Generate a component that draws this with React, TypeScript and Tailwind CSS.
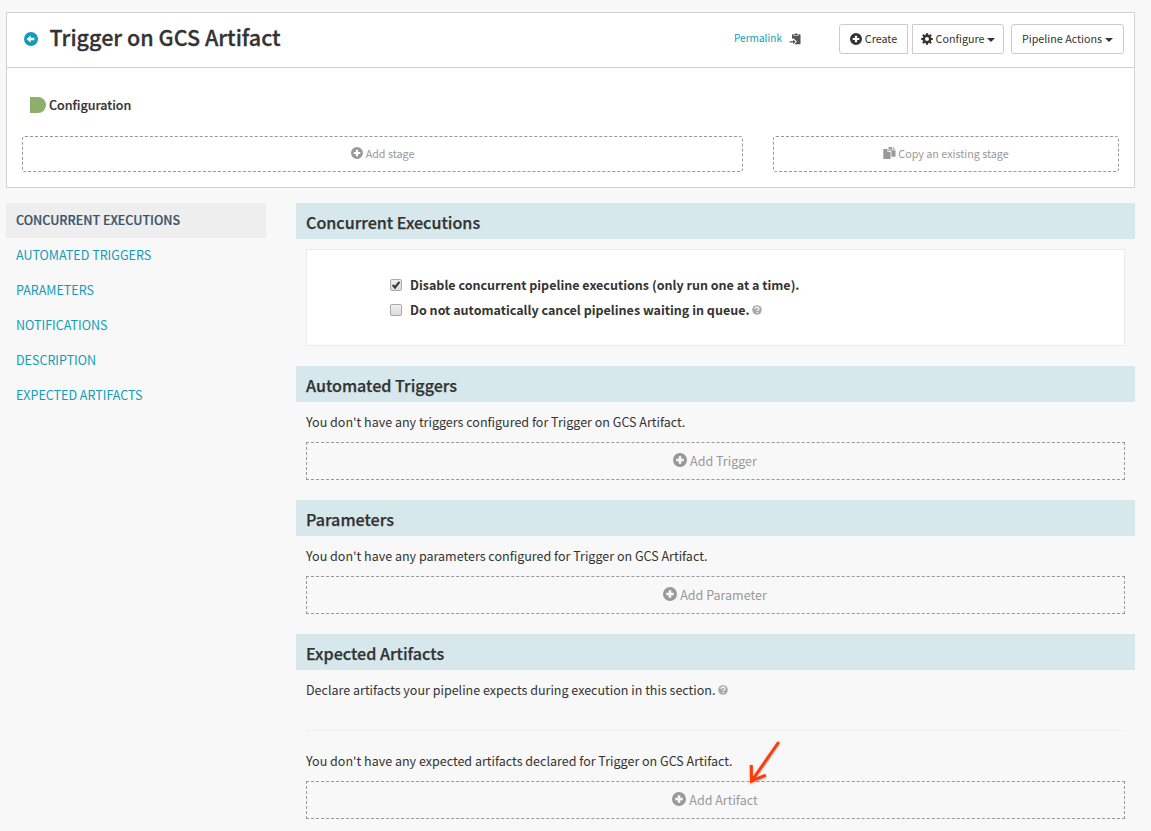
import React from "react";

const PlusIcon = ({ className = "" }: { className?: string }) => (
  <svg viewBox="0 0 14 14" className={"shrink-0 fill-current " + className}>
    <path fillRule="evenodd" d="M7 0a7 7 0 1 1 0 14a7 7 0 0 1 0-14zM5.7 3.2v2.5H3.2v2.6h2.5v2.5h2.6V8.3h2.5V5.7H8.300V3.2z" />
  </svg>
);

const BackIcon = () => (
  <svg viewBox="0 0 14 14" className="h-3.5 w-3.5 shrink-0 fill-[#139cb6]">
    <path fillRule="evenodd" d="M7 0a7 7 0 1 1 0 14a7 7 0 0 1 0-14zM2.6 7l4 3.4V8.2h3.8V5.8H6.600V3.6z" />
  </svg>
);

const PasteIcon = () => (
  <svg viewBox="0 0 12 12" className="h-3 w-3 shrink-0 fill-[#555]">
    <path d="M3 1.3h1.6v1.5h4.900V1.3h1.5a.5.5 0 0 1 .5.5v9a.5.5 0 0 1-.5.5H5.2L8 8.600 4.300 5.300 3 6z" />
    <path d="M5.2.9h.9a1 1 0 0 1 1.9 0h.9v1.3H5.2z" />
    <path d="M4 6.8l2.7 2L4 11V9.6H.6V8.3H4z" />
  </svg>
);

const CogIcon = () => (
  <svg viewBox="0 0 12 12" className="-mt-px h-3 w-3 shrink-0">
    <circle cx="6" cy="6" r="3.2" fill="none" stroke="currentColor" strokeWidth="2.4" />
    <path
      d="M6 0.2v2M6 9.8v2M0.2 6h2M9.8 6h2M1.9 1.9l1.4 1.4M8.7 8.7l1.4 1.4M1.9 10.1l1.4-1.4M8.7 3.3l1.4-1.4"
      stroke="currentColor"
      strokeWidth="2.2"
    />
  </svg>
);

const DuplicateIcon = () => (
  <svg viewBox="0 0 13 12" className="-mt-0.5 h-3 w-[13px] shrink-0 fill-current">
    <path d="M.3 2h4.2v3h3.1v6.900H.3zM5.2 2l2.400 2.300H5.2z" />
    <path d="M5.4.1h3.500v3.100h3.600v6.500H8.400V4.100L5.400 1.2zM9.8.1l2.600 2.400H9.8z" />
  </svg>
);

const HelpIcon = () => (
  <svg viewBox="0 0 10 10" className="-mt-px h-2.5 w-2.5 shrink-0">
    <circle cx="5" cy="5" r="4.8" fill="#aaa" />
    <path d="M3.200 3.900c0-2.300 3.700-2.200 3.700 0 0 1.200-1.700 1.100-1.700 2.200M5.200 7v1.200" fill="none" stroke="#f8f8f8" strokeWidth="1.300" />
  </svg>
);

const Caret = () => <span className="mt-px h-0 w-0 border-x-4 border-t-4 border-x-transparent border-t-current" />;

const Add = ({ label }: { label: string }) => (
  <div className="mx-2.5 flex h-[38px] items-center justify-center gap-[3px] border border-dashed border-[#999] pr-px text-[12.53px] text-[#999]">
    <PlusIcon className="-mt-0.5 h-3.5 w-3.5" />
    <span>{label}</span>
  </div>
);

const Heading = ({ children }: { children: React.ReactNode }) => (
  <h4 className="flex h-9 items-center bg-[#d6e8ec] px-2.5 pt-0.5 text-[16.13px] font-medium text-[#333] [-webkit-text-stroke:0.25px_#333]">{children}</h4>
);

const Check = ({ checked = false }: { checked?: boolean }) => (
  <svg viewBox="0 0 12 12" className="-mt-px mr-2 h-3 w-3 shrink-0">
    <defs>
      <linearGradient id="box" x1="0" y1="0" x2="0" y2="1">
        <stop offset="0" stopColor="#efefef" />
        <stop offset="1" stopColor="#dcdcdc" />
      </linearGradient>
    </defs>
    <rect x=".5" y=".5" width="11" height="11" rx="1.5" fill="url(#box)" stroke="#a9a9a9" />
    {checked && <path d="M2.700 6l2.300 2.500 4.400-5.700" fill="none" stroke="#3a3a3a" strokeWidth="2.200" />}
  </svg>
);

const nav = ["AUTOMATED TRIGGERS", "PARAMETERS", "NOTIFICATIONS", "DESCRIPTION", "EXPECTED ARTIFACTS"];

export default function App() {
  return (
    <div className="relative h-[831px] w-[1151px] overflow-hidden bg-[#f8f8f8] pt-3 pl-1.5 font-['Noto_Sans_CJK_SC',sans-serif] text-[12.53px] leading-none whitespace-nowrap text-[#333]">
      <section className="h-44 w-[1129px] border border-[#d2d2d2] bg-white">
        <header className="flex h-[55px] items-center border-b border-[#d2d2d2] pr-2.5 pb-0.5 pl-[17px]">
          <BackIcon />
          <h3 className="-mt-1 ml-[11.5px] text-[21.55px] font-medium [-webkit-text-stroke:0.3px_#333]">Trigger on GCS Artifact</h3>
          <div className="ml-auto flex items-center text-[10.74px]">
            <span className="-mt-0.5 text-[10.1px] text-[#139cb6]">Permalink</span>
            <span className="mr-[38px] ml-[7px]"><PasteIcon /></span>
            <button className="flex h-[30px] w-[69px] items-center justify-center gap-[3px] rounded-l-[3px] border border-[#ccc]"><PlusIcon className="-mt-px h-3 w-3" />Create</button>
            <button className="ml-1 flex h-[30px] w-[92px] items-center justify-center gap-[3px] rounded-r-[3px] border border-[#ccc]"><CogIcon />Configure<Caret /></button>
            <button className="ml-[7px] flex h-[30px] w-[113px] items-center justify-center gap-[3px] rounded-[3px] border border-[#ccc]">Pipeline Actions<Caret /></button>
          </div>
        </header>
        <div className="mt-[29px] flex h-4 items-center pl-[23px]">
          <span className="mr-[3px] h-4 w-4 rounded-r-full bg-[#8cb06c]" />
          <span className="font-medium [-webkit-text-stroke:0.2px_#333]">Configuration</span>
        </div>
        <div className="mt-[23px] flex gap-[30px] px-[15px] text-[10.74px] text-[#999]">
          <div className="flex h-9 w-[721px] items-center justify-center gap-[3px] rounded-[3px] border border-dashed border-[#999]"><PlusIcon className="-mt-0.5 h-3 w-3" />Add stage</div>
          <div className="flex h-9 w-[346px] items-center justify-center gap-0.5 rounded-[3px] border border-dashed border-[#999]"><DuplicateIcon />Copy an existing stage</div>
        </div>
      </section>
      <div className="mt-[15px] flex gap-[30px]">
        <nav className="w-[260px] text-[#139cb6]">
          <div className="flex h-[35px] items-center bg-[#eee] px-2.5 font-medium text-[#3b5369] [-webkit-text-stroke:0.2px_#3b5369]">CONCURRENT EXECUTIONS</div>
          {nav.map((n) => <div key={n} className="flex h-[35px] items-center px-2.5">{n}</div>)}
        </nav>
        <main className="w-[839px]">
          <Heading>Concurrent Executions</Heading>
          <div className="mx-2.5 mt-2.5 mb-5 h-[97px] border border-[#ebebeb] bg-white pt-[23px] pl-[83px] font-bold">
            <div className="flex h-[25px] items-center"><Check checked />Disable concurrent pipeline executions (only run one at a time).</div>
            <div className="flex h-[25px] items-center"><Check />Do not automatically cancel pipelines waiting in queue.<span className="ml-[3px]"><HelpIcon /></span></div>
          </div>
          <Heading>Automated Triggers</Heading>
          <p className="flex h-10 items-center px-2.5">You don't have any triggers configured for Trigger on GCS Artifact.</p>
          <Add label="Add Trigger" />
          <div className="h-5" />
          <Heading>Parameters</Heading>
          <p className="flex h-10 items-center px-2.5">You don't have any parameters configured for Trigger on GCS Artifact.</p>
          <Add label="Add Parameter" />
          <div className="h-5" />
          <Heading>Expected Artifacts</Heading>
          <p className="flex h-10 items-center px-2.5">Declare artifacts your pipeline expects during execution in this section.<span className="ml-[3px]"><HelpIcon /></span></p>
          <hr className="mx-2.5 mt-5 border-[#eee]" />
          <div className="h-2.5" />
          <p className="flex h-10 items-center px-2.5">You don't have any expected artifacts declared for Trigger on GCS Artifact.</p>
          <Add label="Add Artifact" />
        </main>
      </div>
      <svg viewBox="0 0 40 50" className="absolute top-[738px] left-[744px] h-[50px] w-10 drop-shadow-[0_1px_1px_rgba(0,0,0,0.3)]">
        <path d="M34.8 4L8 42.500M7.300 27L7.500 43L21.800 37.200" fill="none" stroke="#ff3b0a" strokeWidth="3" />
      </svg>
    </div>
  );
}
